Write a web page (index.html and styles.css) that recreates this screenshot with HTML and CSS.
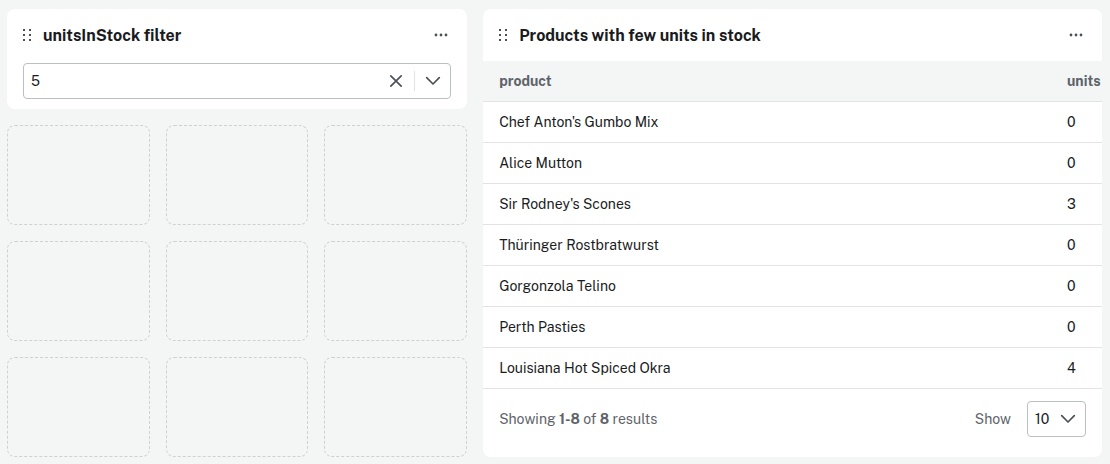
FILE: index.html
```html
<!DOCTYPE html>
<html lang="en">
<head>
<meta charset="utf-8">
<meta name="viewport" content="width=device-width, initial-scale=1">
<title>Dashboard</title>
<link rel="stylesheet" href="styles.css">
</head>
<body>
<main class="dashboard">
  <section class="card card-filter">
    <header class="card-header">
      <svg class="grip" viewBox="0 0 8 12" aria-hidden="true"><path d="M0 0h2v2H0zM6 0h2v2H6zM0 5h2v2H0zM6 5h2v2H6zM0 10h2v2H0zM6 10h2v2H6z"/></svg>
      <h2 class="card-title" id="filter-title">unitsInStock filter</h2>
      <button class="icon-button" type="button" aria-label="Filter options">
        <svg class="dots" viewBox="0 0 14 4" aria-hidden="true"><circle cx="2" cy="2" r="1.4"/><circle cx="7" cy="2" r="1.4"/><circle cx="12" cy="2" r="1.4"/></svg>
      </button>
    </header>
    <div class="combo">
      <input class="combo-input" type="text" value="5" aria-labelledby="filter-title">
      <button class="icon-button" type="button" aria-label="Clear">
        <svg class="cross" viewBox="0 0 12 12" aria-hidden="true"><path d="M.8.8l10.4 10.4M11.2.8.8 11.2"/></svg>
      </button>
      <span class="combo-divider"></span>
      <button class="icon-button" type="button" aria-label="Open list">
        <svg class="chevron" viewBox="0 0 14 8" aria-hidden="true"><path d="M.7.7 7 7 13.3.7"/></svg>
      </button>
    </div>
  </section>

  <section class="card card-table">
    <header class="card-header">
      <svg class="grip" viewBox="0 0 8 12" aria-hidden="true"><path d="M0 0h2v2H0zM6 0h2v2H6zM0 5h2v2H0zM6 5h2v2H6zM0 10h2v2H0zM6 10h2v2H6z"/></svg>
      <h2 class="card-title">Products with few units in stock</h2>
      <button class="icon-button" type="button" aria-label="Table options">
        <svg class="dots" viewBox="0 0 14 4" aria-hidden="true"><circle cx="2" cy="2" r="1.4"/><circle cx="7" cy="2" r="1.4"/><circle cx="12" cy="2" r="1.4"/></svg>
      </button>
    </header>
    <table class="products">
      <thead>
        <tr><th scope="col">product</th><th class="units" scope="col">units</th></tr>
      </thead>
      <tbody>
        <tr><td>Chef Anton's Gumbo Mix</td><td>0</td></tr>
        <tr><td>Alice Mutton</td><td>0</td></tr>
        <tr><td>Sir Rodney's Scones</td><td>3</td></tr>
        <tr><td>Thüringer Rostbratwurst</td><td>0</td></tr>
        <tr><td>Gorgonzola Telino</td><td>0</td></tr>
        <tr><td>Perth Pasties</td><td>0</td></tr>
        <tr><td>Louisiana Hot Spiced Okra</td><td>4</td></tr>
      </tbody>
    </table>
    <footer class="card-footer">
      <p class="summary">Showing <b>1-8</b> of <b>8</b> results</p>
      <label for="page-size">Show</label>
      <div class="page-size">
        <select class="page-size-select" id="page-size"><option>10</option><option>25</option><option>50</option></select>
        <svg class="chevron page-size-chevron" viewBox="0 0 14 8" aria-hidden="true"><path d="M.7.7 7 7 13.3.7"/></svg>
      </div>
    </footer>
  </section>

  <div class="slot"></div><div class="slot"></div><div class="slot"></div>
  <div class="slot"></div><div class="slot"></div><div class="slot"></div>
  <div class="slot"></div><div class="slot"></div><div class="slot"></div>
</main>
</body>
</html>
```

FILE: styles.css
```css
* {
  box-sizing: border-box;
}

body {
  margin: 0;
  background: #f4f6f6;
  color: #1a1b1d;
  font: 14px/20px "Public Sans", Inter, "Liberation Sans", sans-serif;
}

.dashboard {
  display: grid;
  grid-template-columns: repeat(7, minmax(0, 1fr));
  grid-auto-rows: minmax(100px, auto);
  gap: 16px;
  padding: 9px 8px 7px 7px;
}

.card {
  display: flex;
  flex-direction: column;
  overflow: hidden;
  border-radius: 8px;
  background: #fff;
}

.card-filter {
  grid-column: 1 / span 3;
}

.card-table {
  grid-column: 4 / span 4;
  grid-row: 1 / span 4;
}

.slot {
  border: 1px dashed #cdd1d1;
  border-radius: 8px;
}

.card-header {
  display: flex;
  align-items: center;
  gap: 12px;
  height: 52px;
  padding: 0 16px;
}

.card-title {
  flex: 1;
  margin: 0;
  padding-top: 2px;
  font-size: 16px;
  font-weight: 700;
  line-height: 24px;
}

.icon-button {
  display: flex;
  align-items: center;
  justify-content: center;
  width: 20px;
  height: 20px;
  padding: 0;
  border: 0;
  background: none;
}

.grip {
  width: 8px;
  height: 12px;
  fill: #4d5157;
}

.dots {
  width: 14px;
  height: 4px;
  fill: #4d5157;
}

.cross,
.chevron {
  fill: none;
  stroke: #4d5157;
  stroke-width: 1.7;
  stroke-linecap: round;
  stroke-linejoin: round;
  overflow: visible;
}

.cross {
  width: 12px;
  height: 12px;
}

.chevron {
  width: 14px;
  height: 8px;
}

.combo {
  display: flex;
  align-items: center;
  gap: 8px;
  height: 36px;
  margin: 2px 16px 0;
  padding: 0 7px;
  border: 1px solid #bbbec3;
  border-radius: 4px;
}

.combo-input {
  flex: 1;
  min-width: 0;
  padding: 0;
  border: 0;
  outline: 0;
  background: none;
  color: inherit;
  font: inherit;
}

.combo-divider {
  width: 1px;
  height: 20px;
  background: #e2e3e5;
}

.products {
  width: 100%;
  border-collapse: separate;
  border-spacing: 0;
  table-layout: fixed;
}

.products th,
.products td {
  height: 41px;
  padding: 0 0 0 16px;
  border-bottom: 1px solid #e2e3e5;
  text-align: left;
}

.products th {
  background: #f4f6f6;
  color: #5e636a;
  font-weight: 700;
}

.products .units {
  width: 51px;
}

.card-footer {
  display: flex;
  align-items: center;
  gap: 16px;
  padding: 12px 16px;
  color: #5e636a;
}

.summary {
  flex: 1;
  margin: 0;
}

.page-size {
  position: relative;
}

.page-size-select {
  width: 59px;
  height: 36px;
  padding: 0 7px;
  border: 1px solid #bbbec3;
  border-radius: 4px;
  appearance: none;
  background: #fff;
  color: #1a1b1d;
  font: inherit;
}

.page-size-chevron {
  position: absolute;
  top: 14px;
  right: 11px;
  pointer-events: none;
}
```
